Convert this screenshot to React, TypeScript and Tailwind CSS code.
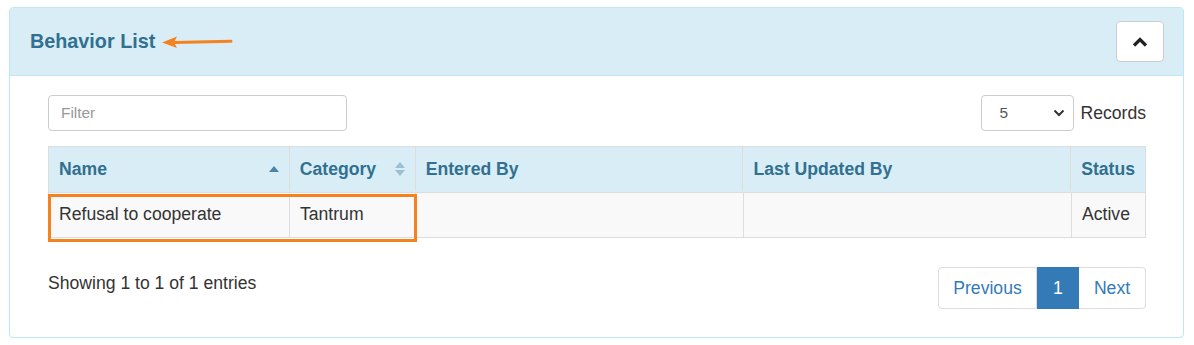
import React from "react"

const columns = [
  { label: "Name", width: "w-[240px]", sort: "asc" },
  { label: "Category", width: "w-[126px]", sort: "both" },
  { label: "Entered By", width: "w-[328px]", sort: "" },
  { label: "Last Updated By", width: "w-[328px]", sort: "" },
  { label: "Status", width: "flex-1", sort: "" },
]

const SortIcon = ({ kind }: { kind: string }) => {
  if (kind === "asc") {
    return (
      <svg width="10" height="6" viewBox="0 0 10 6" className="ml-auto">
        <path d="M0 6 L5 0 L10 6 Z" fill="#4b83a5" />
      </svg>
    )
  }
  if (kind === "both") {
    return (
      <svg width="10" height="14" viewBox="0 0 10 14" className="ml-auto">
        <path d="M0 6 L5 0 L10 6 Z" fill="#9cc0d3" />
        <path d="M0 8 L10 8 L5 14 Z" fill="#9cc0d3" />
      </svg>
    )
  }
  return null
}

const App = () => {
  return (
    <div className="h-[345px] w-[1194px] bg-white pl-[9px] pt-[7px] font-['Liberation_Sans',Arial,sans-serif] text-[#333]">
      <div className="flex h-[331px] w-[1175px] flex-col rounded-[4px] border border-[#bce8f1]">
        <div className="flex h-[68px] items-center justify-between rounded-t-[3px] border-b border-[#bce8f1] bg-[#d9edf7] pl-[20px] pr-[19px]">
          <div className="flex items-center">
            <h3 className="text-[19.8px] font-bold text-[#31708f]">Behavior List</h3>
            <svg width="72" height="14" viewBox="0 0 72 14" className="ml-[6px] mt-[1px]">
              <path d="M14 7.6 L70 6.2" stroke="#f5821f" strokeWidth="3" strokeLinecap="round" />
              <path d="M1 7.5 L16 1.5 L13 7.5 L16 13 Z" fill="#f5821f" />
            </svg>
          </div>
          <button className="flex h-[41px] w-[48px] items-center justify-center rounded-[4px] border border-[#ccc] bg-white">
            <svg width="16" height="10" viewBox="0 0 16 10">
              <path d="M2 8.5 L8 2.5 L14 8.5" stroke="#222" strokeWidth="3.2" fill="none" />
            </svg>
          </button>
        </div>

        <div className="flex flex-1 flex-col pl-[38px] pr-[37px] pt-[19px]">
          <div className="flex items-center justify-between">
            <input
              type="text"
              placeholder="Filter"
              className="h-[36px] w-[299px] rounded-[4px] border border-[#ccc] px-[12px] text-[15.4px] text-[#555] outline-none placeholder:text-[#999]"
            />
            <div className="flex items-center">
              <div className="flex h-[36px] w-[93px] items-center justify-between rounded-[4px] border border-[#ccc] pl-[17px] pr-[8px] text-[15.4px] text-[#555]">
                <span>5</span>
                <svg width="12" height="8" viewBox="0 0 12 8">
                  <path d="M1.5 1.5 L6 6 L10.5 1.5" stroke="#333" strokeWidth="2" fill="none" />
                </svg>
              </div>
              <span className="ml-[6px] text-[17.6px]">Records</span>
            </div>
          </div>

          <div className="mt-[15px] w-[1098px] border border-[#ddd] text-[17.6px]">
            <div className="flex h-[45px] bg-[#d9edf7] pb-[1px] font-bold text-[#31708f]">
              {columns.map((col, i) => (
                <div
                  key={col.label}
                  className={`${col.width} flex items-center px-[10px] ${i > 0 ? "border-l border-[#ddd]" : ""}`}
                >
                  <span>{col.label}</span>
                  <SortIcon kind={col.sort} />
                </div>
              ))}
            </div>
            <div className="relative flex h-[45px] border-t border-[#ddd] bg-[#f9f9f9]">
              <div className="flex w-[240px] items-center px-[10px] pb-[1px]">Refusal to cooperate</div>
              <div className="flex w-[126px] items-center border-l border-[#ddd] px-[10px] pb-[1px]">Tantrum</div>
              <div className="w-[328px] border-l border-[#ddd]" />
              <div className="w-[328px] border-l border-[#ddd]" />
              <div className="flex flex-1 items-center border-l border-[#ddd] px-[10px] pb-[1px]">Active</div>
              <div className="absolute left-[-1px] top-[1px] h-[48px] w-[369px] border-[3px] border-[#f5821f]" />
            </div>
          </div>

          <div className="mt-[29px] flex w-[1098px] items-start justify-between">
            <span className="mt-[3px] text-[17.6px]">Showing 1 to 1 of 1 entries</span>
            <div className="flex h-[42px] text-[17.6px]">
              <div className="flex w-[99px] items-center justify-center rounded-l-[4px] border border-[#ddd] text-[#337ab7]">
                Previous
              </div>
              <div className="flex w-[42px] items-center justify-center border border-[#337ab7] bg-[#337ab7] text-white">
                1
              </div>
              <div className="flex w-[67px] items-center justify-center rounded-r-[4px] border border-l-0 border-[#ddd] text-[#337ab7]">
                Next
              </div>
            </div>
          </div>
        </div>
      </div>
    </div>
  )
}

export default App
